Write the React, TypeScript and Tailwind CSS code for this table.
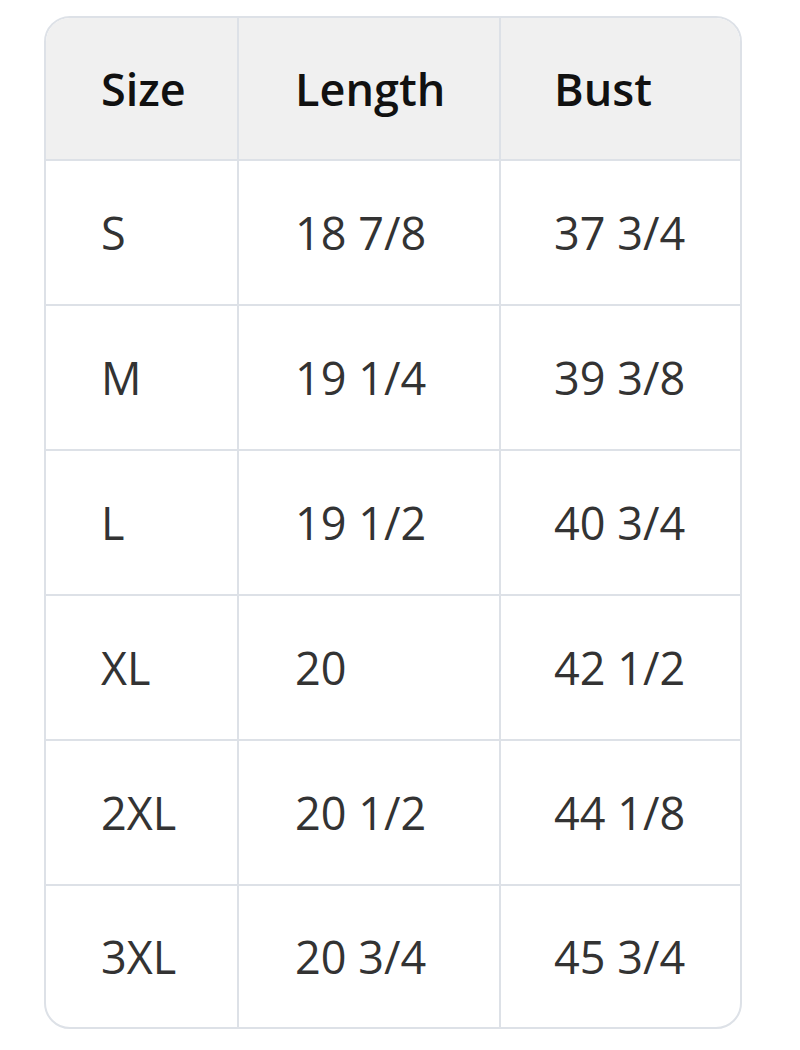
const rows = [
  ["S", "18 7/8", "37 3/4"],
  ["M", "19 1/4", "39 3/8"],
  ["L", "19 1/2", "40 3/4"],
  ["XL", "20", "42 1/2"],
  ["2XL", "20 1/2", "44 1/8"],
  ["3XL", "20 3/4", "45 3/4"],
];

export default function App() {
  return (
    <div className="min-h-[1050px] bg-white pl-[44px] pt-[16px] font-['Open_Sans',sans-serif]">
      <div className="w-[698px] overflow-hidden rounded-[26px] border-2 border-[#dde1e7]">
        <table className="w-full border-collapse text-left">
          <thead>
            <tr className="h-[142px] bg-[#f0f0f0]">
              <th className="w-[192px] pl-[55px] text-[45px] font-semibold text-[#111]">Size</th>
              <th className="w-[262px] border-l-2 border-[#dde1e7] pl-[56px] text-[45px] font-semibold text-[#111]">
                Length
              </th>
              <th className="border-l-2 border-[#dde1e7] pl-[53px] text-[45px] font-semibold text-[#111]">Bust</th>
            </tr>
          </thead>
          <tbody>
            {rows.map(([size, length, bust], i) => (
              <tr
                key={size}
                className={`${i === rows.length - 1 ? "h-[142px]" : "h-[145px]"} border-t-2 border-[#dde1e7]`}
              >
                <td className="pl-[55px] text-[45px] text-[#333]">{size}</td>
                <td className="border-l-2 border-[#dde1e7] pl-[56px] text-[45px] text-[#333]">{length}</td>
                <td className="border-l-2 border-[#dde1e7] pl-[53px] text-[45px] text-[#333]">{bust}</td>
              </tr>
            ))}
          </tbody>
        </table>
      </div>
    </div>
  );
}
